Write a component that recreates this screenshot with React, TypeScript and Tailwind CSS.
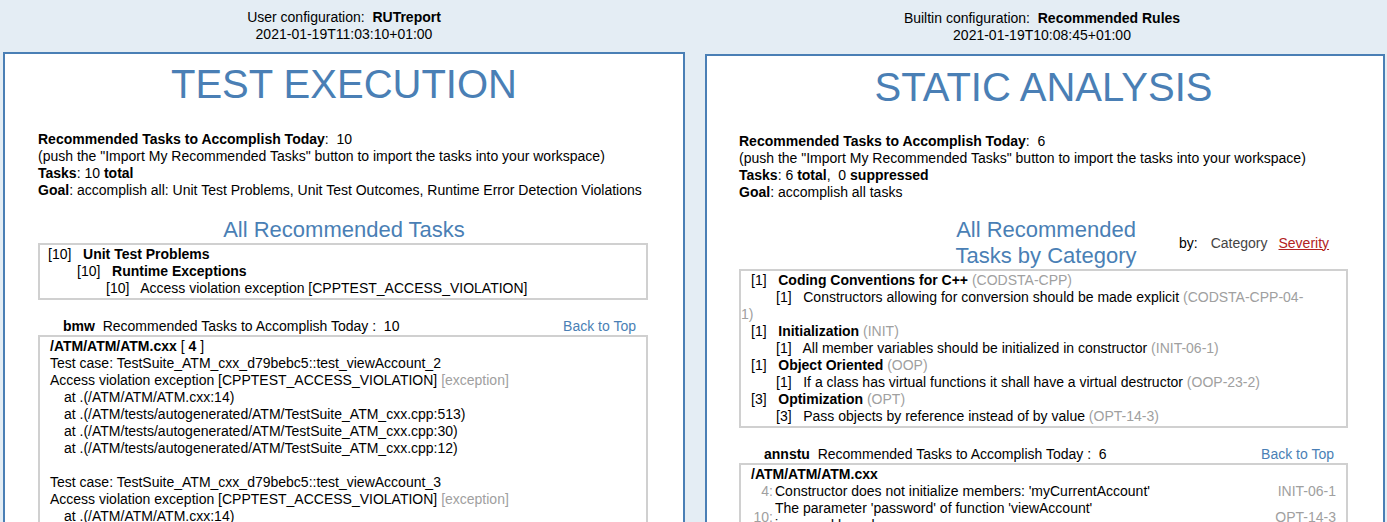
import React from "react";

const gray = "text-[#a0a0a0]";

function Trace({ name }: { name: string }) {
  return (
    <div>
      <div>Test case: {name}</div>
      <div>
        Access violation exception [CPPTEST_ACCESS_VIOLATION] <span className={gray}>[exception]</span>
      </div>
      <div className="pl-[14px]">
        <div>at .(/ATM/ATM/ATM.cxx:14)</div>
        <div>at .(/ATM/tests/autogenerated/ATM/TestSuite_ATM_cxx.cpp:513)</div>
        <div>at .(/ATM/tests/autogenerated/ATM/TestSuite_ATM_cxx.cpp:30)</div>
        <div>at .(/ATM/tests/autogenerated/ATM/TestSuite_ATM_cxx.cpp:12)</div>
      </div>
    </div>
  );
}

function Cat({ n, name, code, children }: { n: number; name: string; code: string; children: React.ReactNode }) {
  return (
    <>
      <div className="pl-[10px]">
        [{n}]&nbsp;&nbsp; <b>{name}</b> <span className={gray}>({code})</span>
      </div>
      <div className="pl-[35px]">{children}</div>
    </>
  );
}

export default function App() {
  return (
    <div className="flex h-[522px] overflow-hidden bg-[#e4edf4] text-[14px] leading-[17px] text-black font-[family-name:Liberation_Sans,Arial,sans-serif]">
      {/* left */}
      <div className="w-[688px] shrink-0 flex flex-col">
        <div className="shrink-0 text-center pt-[9px] h-[52px]">
          <div>User configuration:&nbsp; <b>RUTreport</b></div>
          <div>2021-01-19T11:03:10+01:00</div>
        </div>
        <div className="ml-[3px] w-[682px] flex-1 min-h-0 bg-white border-2 border-[#4a7fb5] border-b-0 px-[33px]">
          <h1 className="text-center text-[40px] leading-[48px] text-[#4a7fb5] mt-[6px]">TEST EXECUTION</h1>
          <div className="mt-[23px]">
            <div><b>Recommended Tasks to Accomplish Today</b>:&nbsp; 10</div>
            <div>(push the "Import My Recommended Tasks" button to import the tasks into your workspace)</div>
            <div><b>Tasks</b>: 10 <b>total</b></div>
            <div><b>Goal</b>: accomplish all: Unit Test Problems, Unit Test Outcomes, Runtime Error Detection Violations</div>
          </div>
          <h2 className="text-center text-[22px] leading-[26px] text-[#4a7fb5] mt-[18px]">All Recommended Tasks</h2>
          <div className="border-2 border-[#d0d0d0] mr-[2px] py-[1px]">
            <div className="pl-[8px]">[10]&nbsp;&nbsp; <b>Unit Test Problems</b></div>
            <div className="pl-[37px]">[10]&nbsp;&nbsp; <b>Runtime Exceptions</b></div>
            <div className="pl-[66px]">[10]&nbsp;&nbsp; Access violation exception [CPPTEST_ACCESS_VIOLATION]</div>
          </div>
          <div className="flex justify-between mt-[18px] pl-[25px] pr-[14px]">
            <div><b>bmw</b>&nbsp; Recommended Tasks to Accomplish Today :&nbsp; 10</div>
            <div className="text-[#4a7fb5]">Back to Top</div>
          </div>
          <div className="border-2 border-[#d0d0d0] border-b-0 mr-[2px] pl-[10px] pt-[1px]">
            <div><b>/ATM/ATM/ATM.cxx</b> [ <b>4</b> ]</div>
            <Trace name="TestSuite_ATM_cxx_d79bebc5::test_viewAccount_2" />
            <div className="h-[17px]" />
            <Trace name="TestSuite_ATM_cxx_d79bebc5::test_viewAccount_3" />
          </div>
        </div>
      </div>
      <div className="w-[9px] shrink-0" />
      {/* right */}
      <div className="flex-1 flex flex-col">
        <div className="shrink-0 text-center pt-[10px] h-[54px]">
          <div>Builtin configuration:&nbsp; <b>Recommended Rules</b></div>
          <div>2021-01-19T10:08:45+01:00</div>
        </div>
        <div className="ml-[8px] w-[680px] flex-1 min-h-0 bg-white border-2 border-[#4a7fb5] border-b-0 pl-[32px] pr-[35px]">
          <h1 className="text-center text-[40px] leading-[48px] text-[#4a7fb5] mt-[7px]">STATIC ANALYSIS</h1>
          <div className="mt-[22px]">
            <div><b>Recommended Tasks to Accomplish Today</b>:&nbsp; 6</div>
            <div>(push the "Import My Recommended Tasks" button to import the tasks into your workspace)</div>
            <div><b>Tasks</b>: 6 <b>total</b>,&nbsp; 0 <b>suppressed</b></div>
            <div><b>Goal</b>: accomplish all tasks</div>
          </div>
          <div className="flex items-center mt-[16px]">
            <h2 className="ml-[212px] w-[190px] text-center text-[22px] leading-[26px] text-[#4a7fb5]">All Recommended Tasks by Category</h2>
            <div className="ml-[38px] flex gap-[13px]">
              <span>by:</span>
              <span className="text-[#444]">Category</span>
              <span className="ml-[-2px] text-[#b22222] underline">Severity</span>
            </div>
          </div>
          <div className="border-2 border-[#d0d0d0] py-[1px] pr-[6px]">
            <Cat n={1} name="Coding Conventions for C++" code="CODSTA-CPP">
              [1]&nbsp;&nbsp; Constructors allowing for conversion should be made explicit <span className={gray}>(CODSTA-CPP-04-</span>
            </Cat>
            <div className={gray}>1)</div>
            <Cat n={1} name="Initialization" code="INIT">
              [1]&nbsp;&nbsp; All member variables should be initialized in constructor <span className={gray}>(INIT-06-1)</span>
            </Cat>
            <Cat n={1} name="Object Oriented" code="OOP">
              [1]&nbsp;&nbsp; If a class has virtual functions it shall have a virtual destructor <span className={gray}>(OOP-23-2)</span>
            </Cat>
            <Cat n={3} name="Optimization" code="OPT">
              [3]&nbsp;&nbsp; Pass objects by reference instead of by value <span className={gray}>(OPT-14-3)</span>
            </Cat>
          </div>
          <div className="flex justify-between mt-[18px] pl-[25px] pr-[14px]">
            <div><b>annstu</b>&nbsp; Recommended Tasks to Accomplish Today :&nbsp; 6</div>
            <div className="text-[#4a7fb5]">Back to Top</div>
          </div>
          <div className="border-2 border-[#d0d0d0] border-b-0 pl-[10px] pr-[10px] pt-[1px]">
            <div><b>/ATM/ATM/ATM.cxx</b></div>
            <div className="flex items-center">
              <span className={`w-[22px] text-right ${gray}`}>4:</span>
              <span className="flex-1 pl-[2px]">Constructor does not initialize members: 'myCurrentAccount'</span>
              <span className={gray}>INIT-06-1</span>
            </div>
            <div className="flex items-center">
              <span className={`w-[22px] text-right ${gray}`}>10:</span>
              <span className="w-[330px] pl-[2px]">The parameter 'password' of function 'viewAccount' is passed by value</span>
              <span className={`ml-auto ${gray}`}>OPT-14-3</span>
            </div>
          </div>
        </div>
      </div>
    </div>
  );
}
